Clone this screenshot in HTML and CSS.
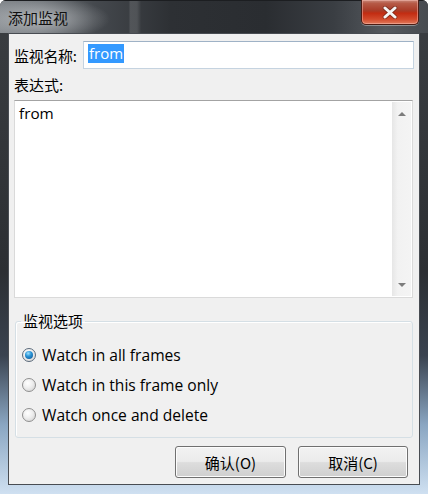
FILE: index.html
```html
<!DOCTYPE html>
<html lang="zh-CN">
<head>
<meta charset="utf-8">
<title>添加监视</title>
<link rel="stylesheet" href="styles.css">
</head>
<body>
<div class="window">
  <div class="titlebar">
    <span class="title">添加监视</span>
    <div class="close">
      <svg width="16" height="13" viewBox="0 0 16 13">
        <path d="M3 2 L13 11 M13 2 L3 11" stroke="#5b2318" stroke-width="4.6" stroke-linecap="round" fill="none" opacity="0.55"/>
        <path d="M3 2 L13 11 M13 2 L3 11" stroke="#f4f4f4" stroke-width="3" stroke-linecap="round" fill="none"/>
      </svg>
    </div>
  </div>
  <div class="client">
    <div class="name-row">
      <span class="label name-label">监视名称:</span>
      <div class="input"><span class="sel">from</span></div>
    </div>
    <div class="label expr-label">表达式:</div>
    <div class="textarea">
      <div class="ta-text">from</div>
      <div class="scrollbar">
        <span class="arrow-box"><span class="arrow up"></span></span>
        <span class="arrow-box"><span class="arrow down"></span></span>
      </div>
    </div>
    <fieldset class="group">
      <legend class="legend">监视选项</legend>
      <div class="radio-row"><span class="radio checked"></span><span>Watch in all frames</span></div>
      <div class="radio-row"><span class="radio"></span><span>Watch in this frame only</span></div>
      <div class="radio-row"><span class="radio"></span><span>Watch once and delete</span></div>
    </fieldset>
    <div class="buttons">
      <button class="btn ok">确认(O)</button>
      <button class="btn cancel">取消(C)</button>
    </div>
  </div>
</div>
</body>
</html>
```
FILE: styles.css
```css
html, body {
  margin: 0;
  padding: 0;
  background: #ffffff;
}

body {
  font-family: "Open Sans", "Noto Sans CJK SC", sans-serif;
  font-size: 15px;
  color: #000;
}

.window {
  width: 428px;
  height: 494px;
  box-sizing: border-box;
  display: flex;
  flex-direction: column;
  padding: 0 8px 9px 8px;
  border-radius: 6px 6px 0 0;
  overflow: hidden;
  background: linear-gradient(180deg, #3b3e42 0%, #2c2f33 55%, #3a4350 72%, #8aa6c2 86%, #cfe0f1 100%);
}

.titlebar {
  height: 33px;
  margin: 0 -8px;
  display: flex;
  justify-content: space-between;
  align-items: flex-start;
  box-sizing: border-box;
  border-top: 1px solid #1c1e21;
  background:
    radial-gradient(ellipse 70px 22px at 40px 18px, rgba(200,203,206,0.75), rgba(200,203,206,0) 100%),
    linear-gradient(90deg, rgba(255,255,255,0) 0%, rgba(255,255,255,0) 30%, rgba(255,255,255,0.12) 30.5%, rgba(255,255,255,0.12) 32%, rgba(255,255,255,0) 33%, rgba(255,255,255,0) 100%),
    linear-gradient(90deg, #7f8489 0%, #6b7075 10%, #45494e 22%, #2d3034 40%, #2a2d31 62%, #3a3e43 78%, #55595e 90%, #474b50 100%);
}

.title {
  margin: 6px 0 0 8px;
  line-height: 22px;
  font-size: 15px;
  color: #111;
  font-family: "Noto Sans CJK SC", sans-serif;
}

.close {
  width: 58px;
  height: 25px;
  margin: -1px 9px 0 0;
  box-sizing: border-box;
  border: 1px solid #4a1c14;
  border-top: none;
  border-radius: 0 0 5px 5px;
  box-shadow: inset 0 0 0 1px rgba(255,200,190,0.45), 0 1px 0 rgba(255,255,255,0.35);
  background: linear-gradient(180deg, #c98a7c 0%, #b65a47 14%, #a93a26 45%, #c22c12 55%, #d24a2c 80%, #e07a5c 100%);
  display: flex;
  align-items: center;
  justify-content: center;
}

.client {
  flex: 1;
  box-sizing: border-box;
  border: 1px solid #484c52;
  background: #f0f0f0;
  padding: 7px 6px 6px 5px;
  display: flex;
  flex-direction: column;
}

.label {
  font-family: "Noto Sans CJK SC", sans-serif;
  font-size: 15px;
  color: #000;
}

.name-row {
  height: 28px;
  display: flex;
  align-items: center;
}

.name-label {
  width: 69px;
  flex: none;
  white-space: nowrap;
  letter-spacing: -0.3px;
}

.input {
  flex: 1;
  height: 28px;
  margin-right: -1px;
  box-sizing: border-box;
  background: #fff;
  border: 1px solid #c5d3e0;
  border-top-color: #9fb2c6;
  padding: 2px 0 0 4px;
  display: flex;
  align-items: flex-start;
}

.sel {
  background: #3399ff;
  color: #fff;
  line-height: 19px;
  padding: 0 1px;
}

.expr-label {
  height: 31px;
  display: flex;
  align-items: center;
  padding-bottom: 1px;
  box-sizing: border-box;
}

.textarea {
  height: 198px;
  box-sizing: border-box;
  background: #fff;
  border: 1px solid #dadada;
  border-top-color: #a3a3a3;
  display: flex;
}

.ta-text {
  flex: 1;
  padding: 2px 0 0 4px;
  line-height: 20px;
  font-size: 15.3px;
}

.scrollbar {
  width: 19px;
  margin: 1px 1px 1px 0;
  background: linear-gradient(90deg, #e6e6e6 0%, #f2f2f2 30%, #f4f4f4 100%);
  display: flex;
  flex-direction: column;
  justify-content: space-between;
}

.arrow-box {
  height: 21px;
  display: flex;
  align-items: center;
  justify-content: center;
}

.arrow {
  width: 0;
  height: 0;
  border-left: 4px solid transparent;
  border-right: 4px solid transparent;
}

.arrow.up {
  border-bottom: 4px solid #7c7c7c;
  margin-top: 2px;
}

.arrow.down {
  border-top: 4px solid #7c7c7c;
  margin-top: -1px;
}

.group {
  margin: 13px 0 0 1px;
  padding: 9px 6px 7px 5px;
  border: 1px solid #d5dfe5;
  border-radius: 3px;
  box-shadow: inset 1px 1px 0 #ffffff;
  min-width: 0;
}

.legend {
  padding: 0 2px;
  line-height: 20px;
  font-family: "Noto Sans CJK SC", sans-serif;
  font-size: 15px;
  color: #000;
}

.radio-row {
  height: 30px;
  display: flex;
  align-items: center;
  gap: 6px;
  padding-left: 1px;
  white-space: nowrap;
  font-size: 15.6px;
}

.radio {
  width: 14px;
  height: 14px;
  box-sizing: border-box;
  border-radius: 50%;
  border: 1px solid #8f8f8f;
  background: radial-gradient(circle at 40% 35%, #ffffff 0%, #eeeeee 45%, #cdcdcd 100%);
  display: flex;
  align-items: center;
  justify-content: center;
  flex: none;
}

.radio.checked {
  border-color: #5a6a7a;
}

.radio.checked::after {
  content: "";
  width: 8px;
  height: 8px;
  border-radius: 50%;
  background: radial-gradient(circle at 40% 30%, #9ee2ff 0%, #2a94d6 40%, #0b4f8e 100%);
}

.buttons {
  margin-top: 8px;
  display: flex;
  justify-content: flex-end;
  gap: 12px;
  padding-right: 5px;
}

.btn {
  height: 32px;
  box-sizing: border-box;
  border: 1px solid #707070;
  border-radius: 3px;
  background: linear-gradient(180deg, #f2f2f2 0%, #ebebeb 48%, #dddddd 52%, #cfcfcf 100%);
  box-shadow: inset 0 0 0 1px #fcfcfc;
  font-family: "Noto Sans CJK SC", sans-serif;
  font-size: 15px;
  color: #000;
  padding: 0;
}

.btn.ok {
  width: 111px;
}

.btn.cancel {
  width: 110px;
}
```
